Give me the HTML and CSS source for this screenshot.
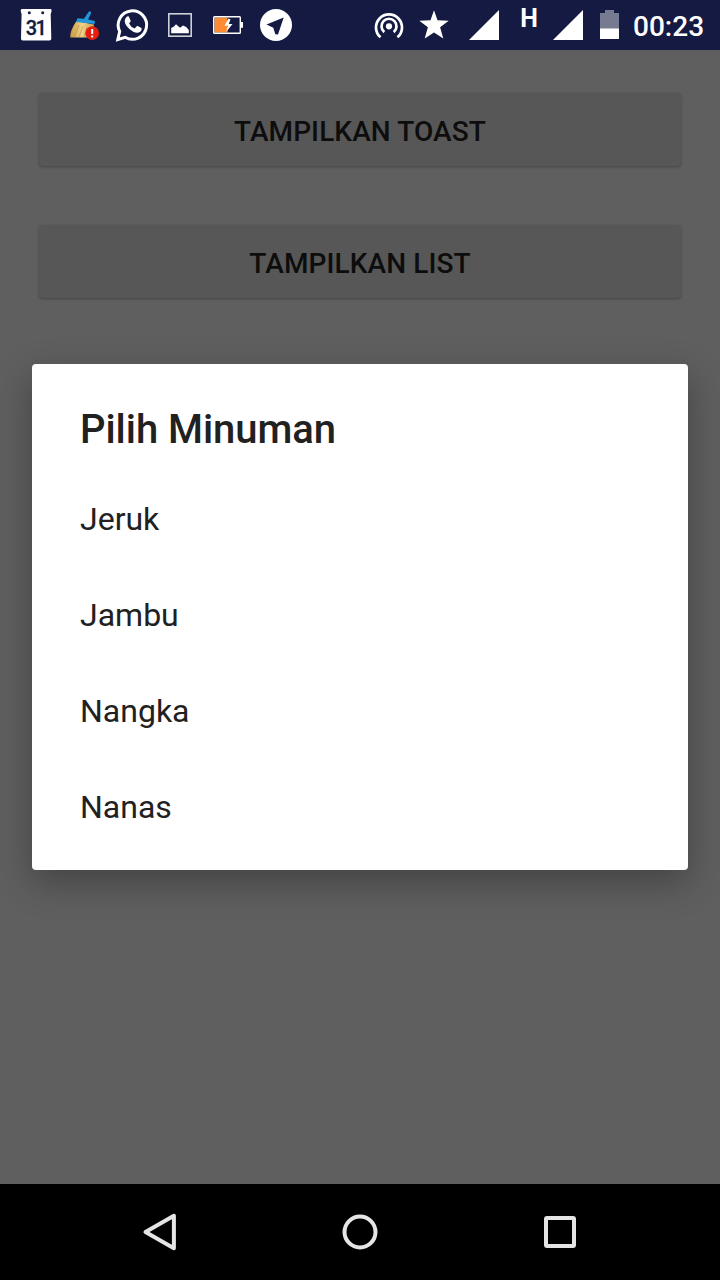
FILE: index.html
```html
<!DOCTYPE html>
<html lang="id">
<head>
<meta charset="utf-8">
<title>Pilih Minuman</title>
<link rel="stylesheet" href="styles.css">
</head>
<body>
<div class="screen">
  <header class="status-bar">
    <div class="notifications">
      <svg class="notice" viewBox="12 0 48 50">
        <path fill="#fff" d="M22 9h28.500c1.400 0 1.400 2 .2 5l.6 24.800q0 1.800-1.800 1.800H22.800q-1.800 0-1.800-1.800L21.600 14c-1.200-3-1.200-5 .4-5z"/>
        <circle cx="29.300" cy="12.800" r="1.500" fill="#141a42"/><circle cx="42.700" cy="12.800" r="1.500" fill="#141a42"/>
        <text x="35.500" y="34.500" class="calendar-day">31</text>
      </svg>
      <svg class="notice" viewBox="12 0 48 50">
        <defs><linearGradient id="bristle"><stop offset="0" stop-color="#c99a45"/><stop offset=".5" stop-color="#f0d28a"/><stop offset="1" stop-color="#cfa050"/></linearGradient></defs>
        <path fill="url(#bristle)" d="M28.500 21L46 24.500L44 37.500H22.300C22 32 24.500 27 28.500 21z"/>
        <path stroke="#ad7f35" stroke-width=".5" fill="none" d="M31 25L26 37M35 26L31 37M39 26.500L36 37"/>
        <path fill="#2196d8" d="M29.500 18.200L36 18.700L40.200 12.500Q41.500 10.500 42.800 11.800Q43.500 13 42.500 14.500L40 19.500L47 21L46.500 24L28 22z"/>
        <circle cx="44.200" cy="33.200" r="6.900" fill="#e3200f"/>
        <path stroke="#fff" stroke-width="2" d="M44.200 29v5M44.200 35.500v2"/>
      </svg>
      <svg class="notice" viewBox="12 0 48 50">
        <path fill="none" stroke="#fff" stroke-width="3" d="M21.800 39.500L23.700 31.400A14.200 14.200 0 1 1 29.200 37.300z"/>
        <path fill="#fff" d="M30.500 17q1-1 2.300-.5l1.900 4.200q.2.600-1.600 2.700 2 4 5.600 5.200l2-2.300q.4-.5 1-.2l3.800 2q.8 3.800-3.600 4.600-3.500.5-8.200-3.500-5.200-4.700-5-8.500.2-2.200 1.800-3.700z"/>
      </svg>
      <svg class="notice" viewBox="12 0 48 50">
        <rect x="24.800" y="13.800" width="22.400" height="22.400" fill="none" stroke="#cbd1d5" stroke-width="1.600"/>
        <path fill="#fff" d="M27.200 33.300v-5.300l2.800-1.500 2-2.200 4 3.500 3-2.300 3.200 1.500 2.600 3v3.300z"/>
      </svg>
      <svg class="notice" viewBox="12 0 48 50">
        <path fill="#ff8b32" d="M22.500 17.500h13v15h-13z"/>
        <rect x="21.700" y="16.700" width="26.600" height="16.600" rx=".8" fill="none" stroke="#fff" stroke-width="1.400"/>
        <path fill="#fff" d="M48.500 22h2.500v5.800h-2.500zM36.500 18.500l-4 7.200h3.200l-1.500 6.300 6.300-8h-3.700l1.700-4.500z"/>
      </svg>
      <svg class="notice" viewBox="12 0 48 50">
        <circle cx="36" cy="25" r="16" fill="#fff"/>
        <path fill="#141a42" d="M26.500 24.600L43.700 17.500L38 34.500L35.300 34.200L33.300 27.700z"/>
      </svg>
    </div>
    <div class="system">
      <svg class="hotspot" viewBox="0 0 30 50">
        <g fill="none" stroke="#fff" stroke-width="2.700"><path d="M6.500 37.300A13 13 0 1 1 23.500 37.300"/><path d="M10.300 32.100A7.500 7.500 0 1 1 19.700 32.100"/></g>
        <circle cx="15" cy="26.300" r="3.100" fill="#fff"/>
      </svg>
      <svg class="star" viewBox="0 0 30 50"><path fill="#fff" d="M15 10.300L18.500 20.200L29.700 20.700L21.100 27.300L24.300 38.500L15 32.500L5.700 38.500L8.900 27.300L.3 20.700L11.500 20.200z"/></svg>
      <svg class="signal" viewBox="0 0 30 50"><path fill="#fff" d="M30 10v30H0z"/></svg>
      <span class="network">H</span>
      <svg class="signal" viewBox="0 0 30 50"><path fill="#fff" d="M30 10v30H0z"/></svg>
      <svg class="battery" viewBox="0 0 19 50"><path fill="#777b91" d="M5 10h9v3h5v16H0V13h5z"/><path fill="#fff" d="M0 28.500h19V39H0z"/></svg>
      <span class="clock">00:23</span>
    </div>
  </header>
  <main class="content">
    <button class="action">TAMPILKAN TOAST</button>
    <button class="action">TAMPILKAN LIST</button>
    <section class="dialog">
      <h1 class="dialog-title">Pilih Minuman</h1>
      <ul class="options">
        <li class="option">Jeruk</li>
        <li class="option">Jambu</li>
        <li class="option">Nangka</li>
        <li class="option">Nanas</li>
      </ul>
    </section>
  </main>
  <nav class="nav-bar">
    <svg class="nav-icon" viewBox="0 0 48 48"><path d="M37.900 7.800v32.400L9.500 24z"/></svg>
    <svg class="nav-icon" viewBox="0 0 48 48"><circle cx="24" cy="24" r="15.500"/></svg>
    <svg class="nav-icon" viewBox="0 0 48 48"><rect x="10" y="10" width="28" height="28" rx="1"/></svg>
  </nav>
</div>
</body>
</html>
```
FILE: styles.css
```css
* { box-sizing: border-box; }
body { margin: 0; font-family: Roboto, sans-serif; }
.screen { width: 720px; height: 1280px; display: flex; flex-direction: column; background: #5f5f5f; overflow: hidden; }
.status-bar { height: 50px; flex: none; display: flex; justify-content: space-between; padding: 0 16px 0 12px; background: #141a42; color: #fff; }
.notifications, .system { display: flex; }
.notice { width: 48px; height: 50px; }
.calendar-day { font: 500 20px Roboto, sans-serif; letter-spacing: -1.5px; fill: #141a42; stroke: #141a42; stroke-width: .3px; text-anchor: middle; }
.system svg { height: 50px; flex: none; }
.hotspot { width: 30px; margin-right: 15px; }
.star { width: 30px; margin-right: 20px; }
.signal { width: 30px; }
.network { width: 16px; margin: 4px 16px 0 22px; display: flex; justify-content: center; font-size: 25px; font-weight: 700; line-height: 29px; }
.battery { width: 19px; margin: 0 14px 0 17px; }
.clock { width: 71px; font-size: 28px; font-weight: 500; line-height: 54px; white-space: nowrap; }
.content { flex: 1; display: flex; flex-direction: column; padding: 43px 32px 0; }
.action { height: 73px; margin: 0 7px 59px; padding: 5px 0 0; border: 0; border-radius: 4px; background: #575757; color: #0d0d0d; font: 500 28px/68px Roboto, sans-serif; letter-spacing: .1px; box-shadow: 0 1px 3px rgba(0, 0, 0, .28); }
.dialog { height: 506px; margin-top: 7px; padding: 37px 48px 0; border-radius: 4px; background: #fff; color: #212121; box-shadow: 0 12px 36px rgba(0, 0, 0, .3); }
.dialog-title { margin: 0; font-size: 40px; font-weight: 500; line-height: 58px; height: 60px; letter-spacing: -.05px; }
.options { margin: 0; padding: 10px 0 0; list-style: none; }
.option { height: 96px; font-size: 32px; line-height: 96px; }
.nav-bar { height: 96px; flex: none; display: flex; justify-content: center; align-items: center; gap: 152px; background: #000; }
.nav-icon { width: 48px; height: 48px; fill: none; stroke: #e5e5e5; stroke-width: 4; stroke-linejoin: round; }
```
